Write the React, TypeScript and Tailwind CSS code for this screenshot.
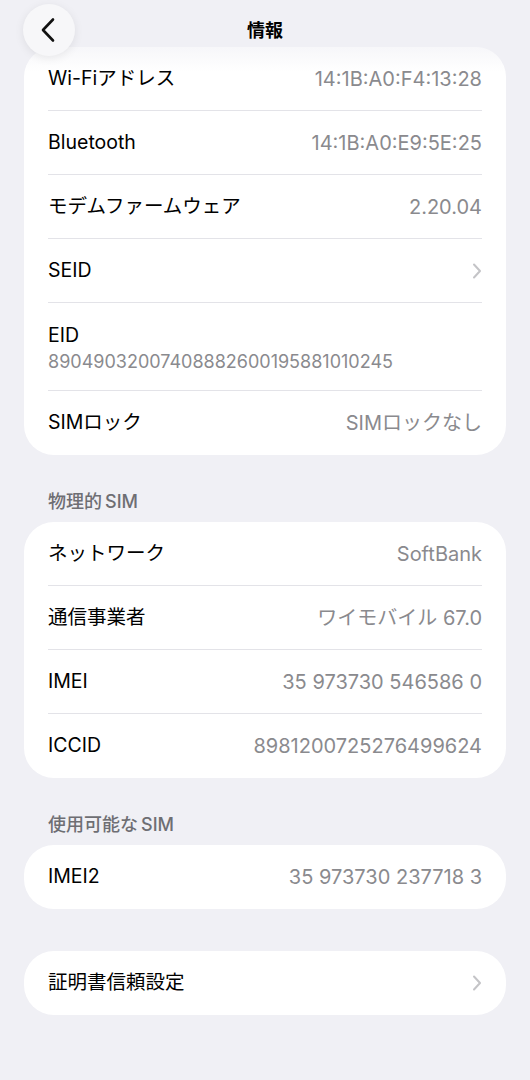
import React from 'react';

type Item = { label: string; value?: string; chevron?: boolean; stacked?: boolean };

const Chevron = () => (
  <svg width="10" height="16" viewBox="0 0 10 16" fill="none">
    <path d="M2 1.5L8 8L2 14.5" stroke="#c4c4c7" strokeWidth="2" strokeLinecap="round" strokeLinejoin="round" />
  </svg>
);

function Card({ items }: { items: Item[] }) {
  return (
    <div className="bg-white rounded-[30px]">
      {items.map((it, i) => {
        const last = i === items.length - 1;
        return (
          <div key={it.label} className="px-[24px]">
            {it.stacked ? (
              <div className={`flex flex-col pt-[20px] pb-[17px] ${last ? '' : 'border-b border-[#e3e3e8]'}`}>
                <span className="text-[19.5px] leading-[24px] text-black">{it.label}</span>
                <span className="text-[18px] leading-[22px] mt-[4px] text-[#8a8a8e]">{it.value}</span>
              </div>
            ) : (
              <div className={`flex items-center justify-between h-[64px] ${last ? '' : 'border-b border-[#e3e3e8]'}`}>
                <span className="text-[19.5px] text-black">{it.label}</span>
                {it.chevron ? <Chevron /> : <span className="text-[20px] text-[#8a8a8e]">{it.value}</span>}
              </div>
            )}
          </div>
        );
      })}
    </div>
  );
}

function SectionLabel({ jp, latin }: { jp: string; latin: string }) {
  return (
    <div className="px-[24px] mt-[36px] mb-[9px] text-[18px] leading-[22px] font-medium text-[#6e6e73]">
      {jp}
      <span className="ml-[3px]">{latin}</span>
    </div>
  );
}

export default function App() {
  return (
    <div className="relative w-[530px] h-[1080px] overflow-hidden bg-[#f0f0f5] font-['Inter','Noto_Sans_CJK_JP',sans-serif]">
      <div className="px-[24px] pt-[47px]">
        <Card
          items={[
            { label: 'Wi-Fiアドレス', value: '14:1B:A0:F4:13:28' },
            { label: 'Bluetooth', value: '14:1B:A0:E9:5E:25' },
            { label: 'モデムファームウェア', value: '2.20.04' },
            { label: 'SEID', chevron: true },
            { label: 'EID', value: '89049032007408882600195881010245', stacked: true },
            { label: 'SIMロック', value: 'SIMロックなし' },
          ]}
        />
        <SectionLabel jp="物理的" latin="SIM" />
        <Card
          items={[
            { label: 'ネットワーク', value: 'SoftBank' },
            { label: '通信事業者', value: 'ワイモバイル 67.0' },
            { label: 'IMEI', value: '35 973730 546586 0' },
            { label: 'ICCID', value: '8981200725276499624' },
          ]}
        />
        <SectionLabel jp="使用可能な" latin="SIM" />
        <Card items={[{ label: 'IMEI2', value: '35 973730 237718 3' }]} />
        <div className="h-[42px]" />
        <Card items={[{ label: '証明書信頼設定', chevron: true }]} />
      </div>

      {/* header fade */}
      <div className="absolute top-0 left-0 right-0 h-[72px] bg-gradient-to-b from-[#f0f0f5] via-[#f0f0f5]/80 to-transparent pointer-events-none" />
      <div className="absolute top-[4px] left-[23px] w-[52px] h-[52px] rounded-full bg-[#f7f7f9] shadow-[0_2px_10px_rgba(0,0,0,0.08)] flex items-center justify-center">
        <svg width="20" height="26" viewBox="0 0 20 26" fill="none">
          <path d="M14 2.5L4 13L14 23.5" stroke="#111" strokeWidth="2.6" strokeLinecap="round" strokeLinejoin="round" />
        </svg>
      </div>
      <div className="absolute top-[18px] left-0 right-0 text-center text-[18px] leading-[26px] font-bold text-black">情報</div>
    </div>
  );
}
